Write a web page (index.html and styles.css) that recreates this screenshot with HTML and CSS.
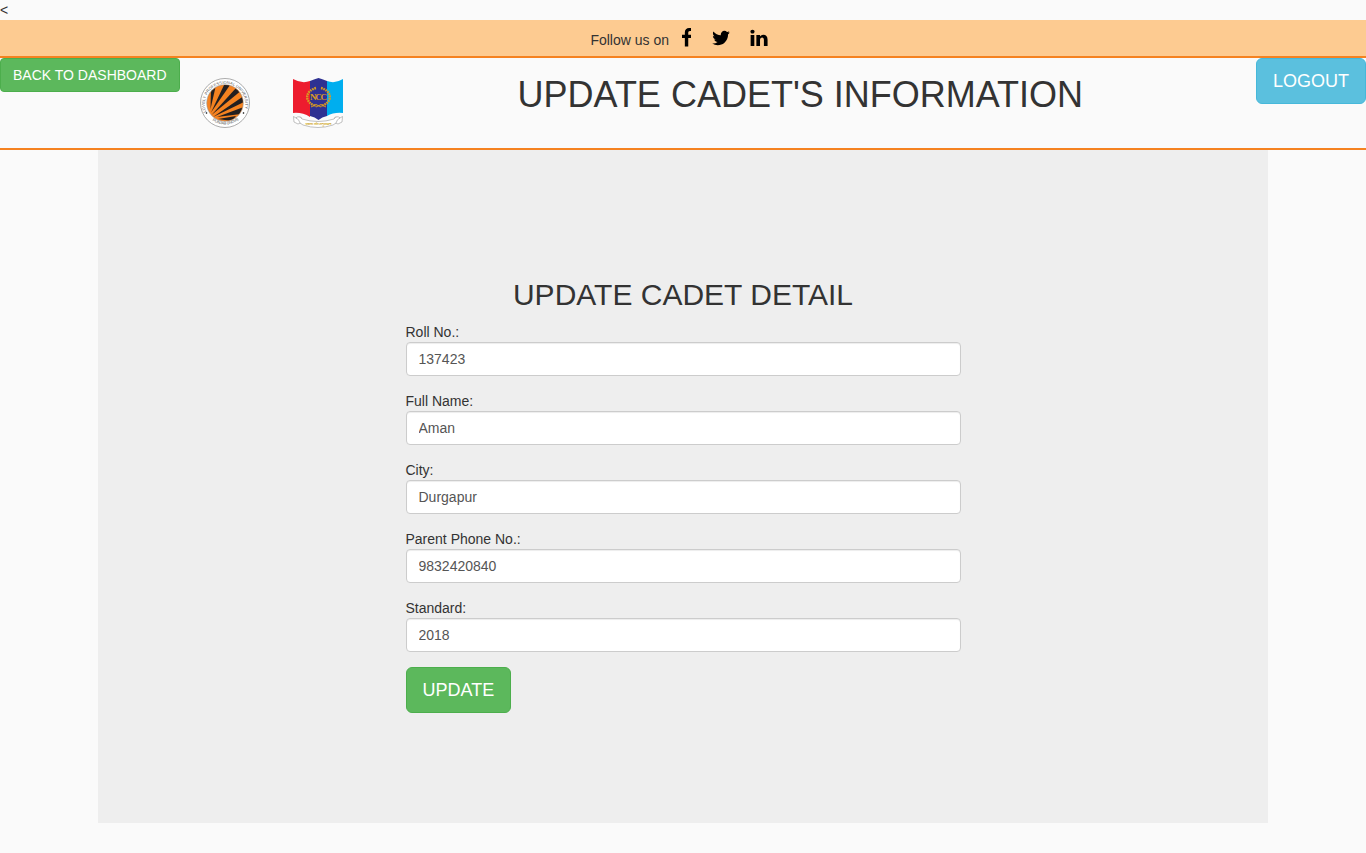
FILE: index.html
```html
<!DOCTYPE html>
<html lang="en">
<head>
<meta charset="utf-8">
<title>Update Cadet's Information</title>
<link rel="stylesheet" href="styles.css">
</head>
<body>
<div class="stray">&lt;</div>
<div class="social">
  <span class="follow">Follow us on</span>
  <svg class="icon-f" viewBox="479 0 864 1792"><path d="M1343 12v264h-157q-86 0-116 36t-30 108v189h293l-39 296h-254v759h-306v-759h-255v-296h255v-218q0-186 104-288.5t277-102.5q147 0 228 12z"/></svg>
  <svg class="icon" viewBox="0 0 1792 1792"><path d="M1684 408q-67 98-162 167 1 14 1 42 0 130-38 259.500t-115.500 248.500-184.500 210.500-258 146-323 54.500q-271 0-496-145 35 4 78 4 225 0 401-138-105-2-188-64.500t-114-159.500q33 5 61 5 43 0 85-11-112-23-185.500-111.500t-73.500-205.500v-4q68 38 146 41-66-44-105-115t-39-154q0-88 44-163 121 149 294.500 238.500t371.500 99.500q-8-38-8-74 0-134 94.500-228.500t228.500-94.500q140 0 236 102 109-21 205-78-37 115-142 178 93-10 186-50z"/></svg>
  <svg class="icon" viewBox="0 0 1792 1792"><path d="M477 625v991h-330v-991h330zm21-306q1 73-50.500 122t-135.500 49h-2q-82 0-132-49t-50-122q0-74 51.500-122.500t134.500-48.500 133 48.500 51 122.500zm1166 729v568h-329v-530q0-105-40.500-164.500t-126.500-59.500q-63 0-105.500 34.500t-63.500 85.500q-11 30-11 81v553h-329q2-399 2-647t-1-296l-1-48h329v144h-2q20-32 41-56t56.500-52 87-43.500 114.500-15.500q171 0 275 113.500t104 332.500z"/></svg>
</div>
<header class="header">
  <a class="btn btn-success">BACK TO DASHBOARD</a>
  <svg class="logo logo-university" viewBox="0 0 50 50">
    <defs>
      <path id="arc-top" d="M6.300 34A20.300 20.300 0 1 1 43.700 34"/>
      <path id="arc-bottom" d="M10 40.500A21.900 21.900 0 0 0 40 40.500"/>
      <clipPath id="ball"><circle cx="25" cy="25" r="17.900"/></clipPath>
    </defs>
    <circle cx="25" cy="25" r="24.500" fill="#fff" stroke="#888" stroke-width=".7"/>
    <circle cx="25" cy="25" r="18.300" fill="#f58220" stroke="#999" stroke-width=".6"/>
    <g clip-path="url(#ball)" fill="#231f20">
      <path d="M10.500 31 11 11 16 7Z"/>
      <path d="M11 34.500 24.500 6 30 7Z"/>
      <path d="M11.500 37 36 10 39.500 14Z"/>
      <path d="M13 39 43 18.500 44 24Z"/>
      <path d="M17 39 44 29 41 36Z"/>
      <path d="M18 41 36 38 32 43Z"/>
    </g>
    <text class="seal"><textPath href="#arc-top" textLength="76">LOVELY PROFESSIONAL UNIVERSITY</textPath></text>
    <text class="seal"><textPath href="#arc-bottom" startOffset="3" textLength="28">PUNJAB (INDIA)</textPath></text>
    <circle cx="6.500" cy="35" r=".8"/><circle cx="43.500" cy="35" r=".8"/>
  </svg>
  <svg class="logo logo-ncc" viewBox="0 0 50 50">
    <path fill="#ed1c2e" d="M0 1Q9 6 17 3V39Q9 34 0 35Z"/>
    <path fill="#2e3192" d="M17 3Q22 1 25.500 0Q29 1 34 3V38Q29 39 25.500 42Q22 39 17 38Z"/>
    <path fill="#00aeef" d="M34 3Q42 6 50 1V35Q41 34 34 38Z"/>
    <g fill="none" stroke="#d89b22">
      <path d="M23 10A13 9.500 0 0 0 23 28M28 10A13 9.500 0 0 1 28 28" stroke-width="2.400" stroke-dasharray="1.700 .7"/>
      <path d="M18 29 23 26.500 28 29M23 29 28 26.500 33 29" stroke-width="1"/>
    </g>
    <text class="ncc-name" x="25.500" y="22" textLength="17">NCC</text>
    <g fill="#fff" stroke="#999" stroke-width=".6">
      <path d="M3 40 .5 38.500 1 44 5 46 10 44 8 39Z"/>
      <path d="M47 40 49.500 38.500 49 44 45 46 40 44 42 39Z"/>
      <path d="M3 40Q6 37 9 41Q25 46 41 41Q44 37 47 40Q44 41 43 45L40 47Q25 52 10 47L7 45Q6 41 3 40Z"/>
    </g>
    <text class="motto" x="25.500" y="47.300" textLength="26">एकता और अनुशासन</text>
  </svg>
  <h1 class="title">UPDATE CADET'S INFORMATION</h1>
  <a class="btn btn-info">LOGOUT</a>
</header>
<main class="panel">
  <form class="form">
    <h2 class="subtitle">UPDATE CADET DETAIL</h2>
    <div class="field"><label for="roll">Roll No.:</label><input id="roll" class="input" value="137423"></div>
    <div class="field"><label for="name">Full Name:</label><input id="name" class="input" value="Aman"></div>
    <div class="field"><label for="city">City:</label><input id="city" class="input" value="Durgapur"></div>
    <div class="field"><label for="phone">Parent Phone No.:</label><input id="phone" class="input" value="9832420840"></div>
    <div class="field"><label for="standard">Standard:</label><input id="standard" class="input" value="2018"></div>
    <button class="btn btn-success btn-large" type="button">UPDATE</button>
  </form>
</main>
</body>
</html>
```
FILE: styles.css
```css
* { box-sizing: border-box; }
body {
  margin: 0;
  background: #fafafa;
  color: #333;
  font: 14px/20px "Liberation Sans", Arial, sans-serif;
}
.stray { height: 20px; }
.social {
  display: flex;
  height: 38px;
  padding: 7.500px 0 0 590.400px;
  background: #fdcb91;
  border-bottom: 2px solid #f58220;
}
.follow { width: 91.300px; padding-top: 2.500px; }
.icon-f { width: 9.640px; height: 20px; margin-right: 20px; }
.icon { width: 20px; height: 20px; margin-right: 17.500px; }
.header {
  display: flex;
  align-items: flex-start;
  height: 92px;
  border-bottom: 2px solid #f58220;
}
.btn {
  border: 1px solid;
  border-radius: 4px;
  color: #fff;
  font: 14px/20px "Liberation Sans", Arial, sans-serif;
  padding: 6px 12px;
  white-space: nowrap;
}
.btn-success { background: #5cb85c; border-color: #4cae4c; }
.btn-info {
  margin-left: auto;
  background: #5bc0de;
  border-color: #46b8da;
}
.btn-info, .btn-large {
  padding: 10px 16px;
  border-radius: 6px;
  font-size: 18px;
  line-height: 24px;
}
.logo { width: 50px; height: 50px; margin-top: 20px; }
.logo-university { margin-left: 20px; }
.logo-ncc { margin-left: 43px; }
.seal { font: 4px "Liberation Sans", sans-serif; fill: #555; }
.ncc-name { font: bold 9px "Liberation Serif", serif; fill: #d89b22; text-anchor: middle; }
.motto { font: bold 3.500px "Noto Sans", sans-serif; fill: #d4b040; text-anchor: middle; }
.title {
  margin: 17px 0 0 175px;
  font-size: 36px;
  font-weight: 500;
  line-height: 40px;
  white-space: nowrap;
}
.panel {
  width: 1170px;
  height: 673px;
  margin: 0 auto;
  padding-top: 128px;
  background: #eee;
}
.form { width: 555px; margin: 0 auto; }
.subtitle {
  margin: 0 0 11px;
  font-size: 30px;
  font-weight: 500;
  line-height: 33px;
  text-align: center;
}
.field { margin-bottom: 15px; }
.field label { display: block; }
.input {
  display: block;
  width: 100%;
  height: 34px;
  padding: 6px 12px;
  border: 1px solid #ccc;
  border-radius: 4px;
  background: #fff;
  box-shadow: inset 0 1px 1px rgba(0, 0, 0, .075);
  color: #555;
  font: inherit;
}
```
